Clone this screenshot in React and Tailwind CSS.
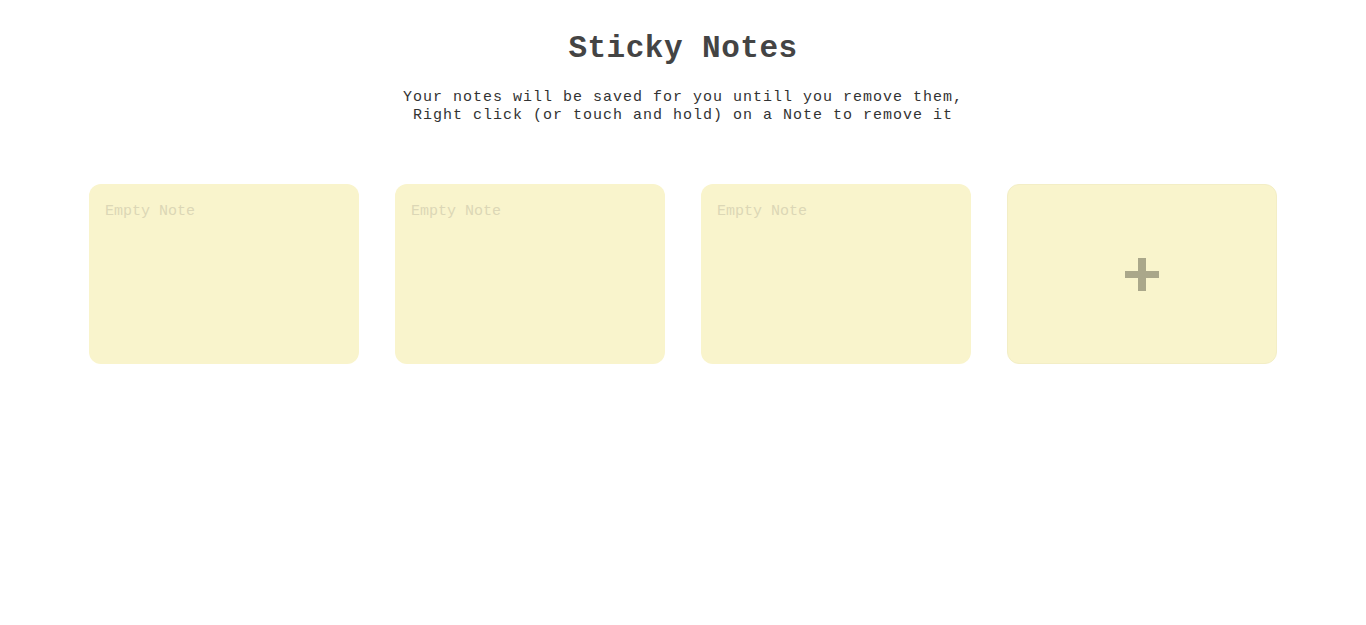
export default function App() {
  const notes = ["", "", ""];

  return (
    <div className="min-h-screen bg-white font-['Liberation_Mono','Courier_New',monospace] text-[#333]">
      <header className="flex flex-col items-center pt-[31px]">
        <h1 className="text-[31px] leading-[36px] font-bold tracking-[0.5px] text-[#444]">
          Sticky Notes
        </h1>
        <p className="mt-[22px] text-center text-[15px] leading-[18px] tracking-[1px] text-[#333]">
          Your notes will be saved for you untill you remove them,
          <br />
          Right click (or touch and hold) on a Note to remove it
        </p>
      </header>

      <main className="mt-[59px] flex justify-center gap-[36px]">
        {notes.map((n, i) => (
          <textarea
            key={i}
            defaultValue={n}
            placeholder="Empty Note"
            className="h-[180px] w-[270px] resize-none rounded-[12px] bg-[#f9f4cc] px-[16px] pt-[18px] pb-[16px] text-[15px] leading-[20px] text-[#444] outline-none placeholder:text-[#dcd7b6]"
          />
        ))}
        <button className="flex h-[180px] w-[270px] items-center justify-center rounded-[12px] border border-[#f3eec6] bg-[#f9f4cc]">
          <svg width="34" height="33" viewBox="0 0 34 33">
            <rect x="13" y="0" width="8" height="33" fill="#aaa78a" />
            <rect x="0" y="13" width="34" height="7" fill="#aaa78a" />
          </svg>
        </button>
      </main>
    </div>
  );
}
